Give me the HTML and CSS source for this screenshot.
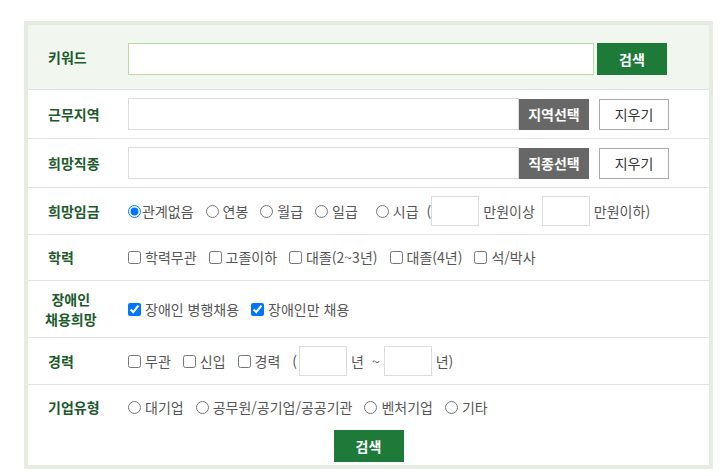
FILE: index.html
```html
<!DOCTYPE html>
<html lang="ko">
<head>
    <meta charset="UTF-8" />
    <title>채용정보 상세검색</title>
    <link rel="stylesheet" href="styles.css">
</head>
<body>
    <form class="search-box">
        <div class="row row-keyword">
            <div class="label">키워드</div>
            <div class="field">
                <input type="text" class="text text-keyword">
                <button type="button" class="btn btn-green btn-search">검색</button>
            </div>
        </div>

        <div class="row">
            <div class="label">근무지역</div>
            <div class="field">
                <input type="text" class="text text-wide">
                <button type="button" class="btn btn-dark">지역선택</button>
                <button type="button" class="btn btn-line">지우기</button>
            </div>
        </div>

        <div class="row">
            <div class="label">희망직종</div>
            <div class="field">
                <input type="text" class="text text-wide">
                <button type="button" class="btn btn-dark">직종선택</button>
                <button type="button" class="btn btn-line">지우기</button>
            </div>
        </div>

        <div class="row">
            <div class="label">희망임금</div>
            <div class="field">
                <label class="opt opt-tight"><input type="radio" name="pay" checked>관계없음</label>
                <label class="opt"><input type="radio" name="pay">연봉</label>
                <label class="opt"><input type="radio" name="pay">월급</label>
                <label class="opt"><input type="radio" name="pay">일급</label>
                <label class="opt opt-hourly"><input type="radio" name="pay">시급</label>
                <span class="paren">(</span>
                <input type="text" class="text text-small">
                <span class="unit">만원이상</span>
                <input type="text" class="text text-small">
                <span class="unit">만원이하)</span>
            </div>
        </div>

        <div class="row">
            <div class="label">학력</div>
            <div class="field">
                <label class="opt"><input type="checkbox">학력무관</label>
                <label class="opt"><input type="checkbox">고졸이하</label>
                <label class="opt"><input type="checkbox">대졸(2~3년)</label>
                <label class="opt"><input type="checkbox">대졸(4년)</label>
                <label class="opt"><input type="checkbox">석/박사</label>
            </div>
        </div>

        <div class="row row-double">
            <div class="label"><span class="label-stack">장애인<br>채용희망</span></div>
            <div class="field">
                <label class="opt"><input type="checkbox" checked>장애인 병행채용</label>
                <label class="opt"><input type="checkbox" checked>장애인만 채용</label>
            </div>
        </div>

        <div class="row">
            <div class="label">경력</div>
            <div class="field">
                <label class="opt"><input type="checkbox">무관</label>
                <label class="opt"><input type="checkbox">신입</label>
                <label class="opt"><input type="checkbox">경력</label>
                <span class="paren">(</span>
                <input type="text" class="text text-small">
                <span class="unit">년</span>
                <span class="unit">~</span>
                <input type="text" class="text text-small">
                <span class="unit">년)</span>
            </div>
        </div>

        <div class="row">
            <div class="label">기업유형</div>
            <div class="field">
                <label class="opt"><input type="radio" name="corp">대기업</label>
                <label class="opt"><input type="radio" name="corp">공무원/공기업/공공기관</label>
                <label class="opt"><input type="radio" name="corp">벤처기업</label>
                <label class="opt"><input type="radio" name="corp">기타</label>
            </div>
        </div>

        <div class="actions">
            <button type="button" class="btn btn-green">검색</button>
        </div>
    </form>
</body>
</html>
```

FILE: styles.css
```css
body {
    margin: 0;
    padding: 21px 0 0 24px;
    font-family: "Noto Sans CJK KR", "Noto Sans", sans-serif;
    font-size: 14px;
    color: #555;
    background-color: #fff;
}
.search-box {
    box-sizing: border-box;
    width: 689px;
    border: 4px solid #e6ece1;
    background-color: #fff;
}
.row {
    display: flex;
    align-items: center;
    padding: 8px 0;
    border-top: 1px solid #e2e2e2;
    line-height: 29px;
}
.row-keyword {
    padding: 18px 0 14px;
    border-top: none;
    background-color: #f1f7ef;
}
.row-keyword .label {
    margin-top: -3px;
}
.label {
    box-sizing: border-box;
    width: 100px;
    padding-left: 20px;
    flex-shrink: 0;
    color: #1c5a2c;
    font-weight: bold;
}
.row-double .label {
    line-height: 20px;
}
.label-stack {
    display: inline-block;
    margin-left: -3px;
    text-align: center;
}
.field {
    display: flex;
    align-items: center;
}
.text {
    box-sizing: border-box;
    height: 32px;
    margin: 0;
    padding: 0 6px;
    border: 1px solid #dcdcdc;
    font: inherit;
    background-color: #fff;
}
.text-keyword {
    width: 466px;
    border-color: #b9d9ab;
}
.text-wide {
    width: 391px;
}
.text-small {
    width: 48px;
    height: 30px;
}
.btn {
    box-sizing: border-box;
    width: 70px;
    height: 32px;
    margin: 0;
    padding: 0;
    border: none;
    font: inherit;
    cursor: pointer;
}
.btn-green {
    background-color: #1e7a39;
    color: #fff;
    font-weight: bold;
}
.btn-search {
    margin-left: 3px;
}
.btn-dark {
    height: 31px;
    background-color: #676767;
    color: #fff;
    font-weight: bold;
}
.btn-line {
    height: 31px;
    margin-left: 10px;
    border: 1px solid #aaa;
    background-color: #fff;
    color: #333;
}
.opt {
    display: inline-flex;
    align-items: center;
    gap: 4px;
    margin-right: 12px;
    white-space: nowrap;
}
.opt-tight {
    gap: 1px;
}
.opt-hourly {
    margin-left: 6px;
    margin-right: 8px;
}
.opt input {
    margin: 0;
    width: 13px;
    height: 13px;
}
.paren {
    margin-right: 2px;
}
.opt-hourly + .paren {
    margin-right: 0;
}
.unit {
    margin: 0 4px;
}
.text-small + .unit + .text-small {
    margin-left: 3px;
}
.actions {
    padding-bottom: 3px;
    text-align: center;
    line-height: 0;
}
```
